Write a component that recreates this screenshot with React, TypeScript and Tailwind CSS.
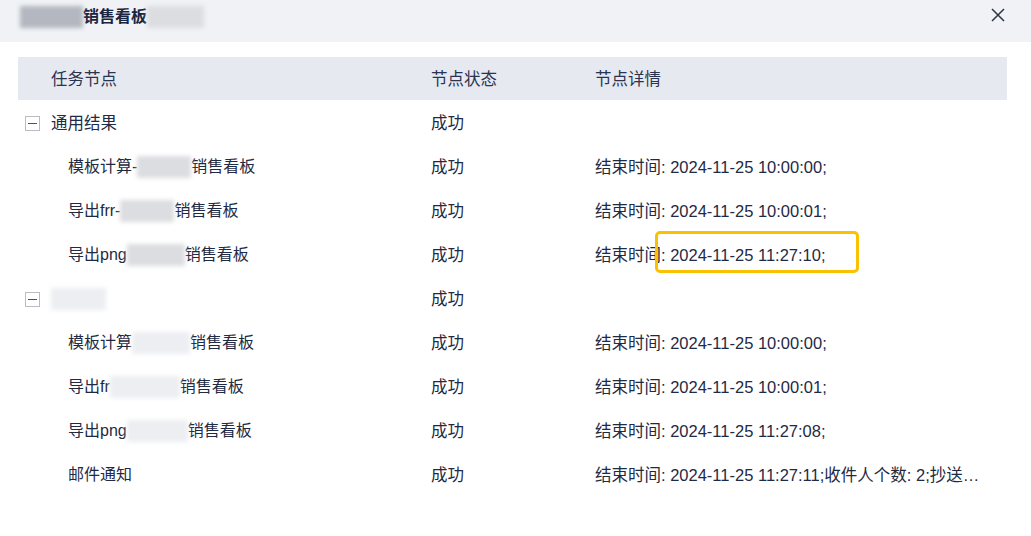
import React from 'react'

const font = { fontFamily: '"Liberation Sans", "Noto Sans CJK SC", sans-serif' }

function Blur({ w, tone = 'light' }: { w: number; tone?: 'light' | 'dark' | 'faint' }) {
  const bg =
    tone === 'dark' ? 'bg-[#b4b7bf]' : tone === 'faint' ? 'bg-[#eceef1]' : 'bg-[#dcdde0]'
  return <span className={`inline-block h-[22px] align-middle blur-[2px] ${bg}`} style={{ width: w }} />
}

function Toggle() {
  return (
    <span className="flex h-[15px] w-[15px] items-center justify-center border border-[#b8bcc6] bg-white">
      <span className="h-px w-[9px] bg-[#4a5160]" />
    </span>
  )
}

type Row = {
  parent?: boolean
  name: React.ReactNode
  detail?: React.ReactNode
  highlight?: boolean
}

const rows: Row[] = [
  { parent: true, name: <>通用结果</> },
  { name: <>模板计算-<Blur w={54} />销售看板</>, detail: '结束时间: 2024-11-25 10:00:00;' },
  { name: <>导出frr-<Blur w={54} />销售看板</>, detail: '结束时间: 2024-11-25 10:00:01;' },
  { name: <>导出png<Blur w={58} />销售看板</>, detail: '结束时间: 2024-11-25 11:27:10;', highlight: true },
  { parent: true, name: <Blur w={55} tone="faint" /> },
  { name: <>模板计算<Blur w={58} tone="faint" />销售看板</>, detail: '结束时间: 2024-11-25 10:00:00;' },
  { name: <>导出fr<Blur w={70} tone="faint" />销售看板</>, detail: '结束时间: 2024-11-25 10:00:01;' },
  { name: <>导出png<Blur w={61} tone="faint" />销售看板</>, detail: '结束时间: 2024-11-25 11:27:08;' },
  { name: <>邮件通知</>, detail: '结束时间: 2024-11-25 11:27:11;收件人个数: 2;抄送…' },
]

export default function App() {
  return (
    <div className="h-[536px] w-[1031px] overflow-hidden bg-white text-[16.5px] text-[#1f2a44]" style={font}>
      <div className="flex h-[42px] items-start justify-between bg-[#f0f2f5] pl-[20px] pr-[26px] pt-[5px]">
        <div className="flex items-center">
          <Blur w={63} tone="dark" />
          <span className="text-[16px] font-bold text-[#1a2440]">销售看板</span>
          <Blur w={57} tone="light" />
        </div>
        <svg width="14" height="14" viewBox="0 0 14 14" className="mt-[3px] text-[#2c3447]">
          <path d="M1 1 L13 13 M13 1 L1 13" stroke="currentColor" strokeWidth="1.5" fill="none" />
        </svg>
      </div>

      <div className="mx-[18px] mt-[15px] w-[989px]">
        <div className="grid h-[43px] grid-cols-[413px_164px_1fr] items-center bg-[#e6e9f0] pt-[2px] text-[#2a3450]">
          <div className="pl-[33px]">任务节点</div>
          <div>节点状态</div>
          <div>节点详情</div>
        </div>
        {rows.map((r, i) => (
          <div key={i} className="grid h-[44px] grid-cols-[413px_164px_1fr] items-center pt-[2px]">
            <div
              className={`flex items-center whitespace-nowrap ${
                r.parent ? 'pl-[7px]' : 'pl-[50px] text-[16px]'
              }`}
            >
              {r.parent && (
                <span className="mr-[11px]">
                  <Toggle />
                </span>
              )}
              {r.name}
            </div>
            <div>成功</div>
            <div className="relative whitespace-nowrap">
              {r.detail}
              {r.highlight && (
                <span className="absolute left-[60px] top-[-12px] h-[42px] w-[204px] rounded-[5px] border-[3px] border-[#f9c100]" />
              )}
            </div>
          </div>
        ))}
      </div>
    </div>
  )
}
